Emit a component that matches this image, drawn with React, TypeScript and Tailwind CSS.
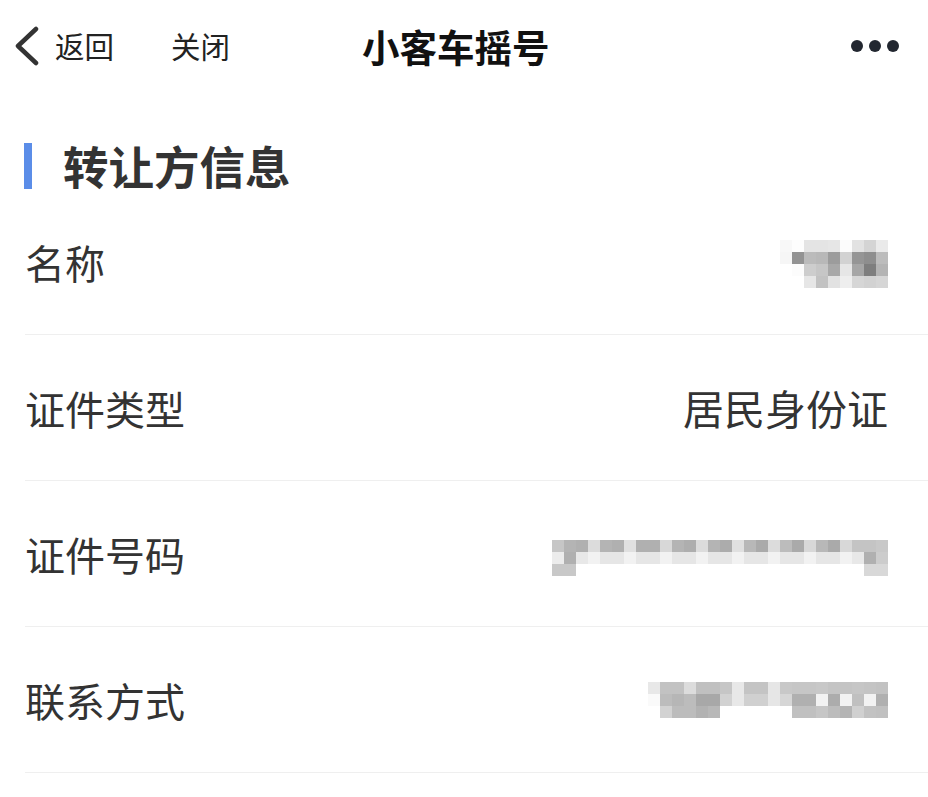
import React from 'react';

// blurred (mosaic) values: grey shades keyed by short code
const G: Record<string, string> = {
  ff: 'bg-white', fd: 'bg-[#fdfdfd]', fc: 'bg-[#fcfcfc]', fa: 'bg-[#fafafa]', f8: 'bg-[#f8f8f8]',
  f6: 'bg-[#f6f6f6]', f2: 'bg-[#f2f2f2]', ee: 'bg-[#eeeeee]', ec: 'bg-[#ececec]', ea: 'bg-[#eaeaea]',
  e8: 'bg-[#e8e8e8]', e6: 'bg-[#e6e6e6]', e4: 'bg-[#e4e4e4]', e2: 'bg-[#e2e2e2]', e0: 'bg-[#e0e0e0]',
  dc: 'bg-[#dcdcdc]', d8: 'bg-[#d8d8d8]', d6: 'bg-[#d6d6d6]', d4: 'bg-[#d4d4d4]', d2: 'bg-[#d2d2d2]',
  d0: 'bg-[#d0d0d0]', cd: 'bg-[#cdcdcd]', c8: 'bg-[#c8c8c8]', c6: 'bg-[#c6c6c6]', c4: 'bg-[#c4c4c4]',
  c2: 'bg-[#c2c2c2]', c0: 'bg-[#c0c0c0]', bc: 'bg-[#bcbcbc]', bb: 'bg-[#bbbbbb]', b8: 'bg-[#b8b8b8]',
  b6: 'bg-[#b6b6b6]', b4: 'bg-[#b4b4b4]', b2: 'bg-[#b2b2b2]', b0: 'bg-[#b0b0b0]', ae: 'bg-[#aeaeae]',
  ac: 'bg-[#acacac]', aa: 'bg-[#aaaaaa]', a8: 'bg-[#a8a8a8]', a6: 'bg-[#a6a6a6]', '9c': 'bg-[#9c9c9c]',
  '95': 'bg-[#959595]', '93': 'bg-[#939393]', '8e': 'bg-[#8e8e8e]', '7e': 'bg-[#7e7e7e]',
};

const nameMosaic = [
  'f8 fd e4 e4 e6 fc e2 d4 ea',
  'f6 93 bb b8 9c d2 95 8e bc',
  'ff fc cd c6 a8 e6 a6 7e b4',
  'ff ff e6 c2 e2 ee d6 d2 d6',
];

const idMosaic = [
  'c6 b4 b0 dc b4 b0 e0 b0 b0 d8 b4 ae dc b4 ac e0 b8 aa dc bc aa d8 b8 aa d8 c4 c4 c8',
  'ec b0 e8 f2 e6 e6 f2 e6 e6 f2 e6 e6 f2 e6 e6 f2 e6 e6 f2 e6 e6 f2 e6 e6 f2 e8 b0 cc',
  'c8 c8 ff ff ff ff ff ff ff ff ff ff ff ff ff ff ff ff ff ff ff ff ff ff ff ff d8 d8',
];

const phoneMosaic = [
  'e8 c2 c2 dc c0 c0 c6 e8 c4 c4 e6 c8 c6 c6 c8 c4 c4 c6 c4 c2',
  'fa bc b6 bc a8 a8 d2 e8 d0 d0 e6 d6 b0 b0 f2 ac f2 c0 f2 b0',
  'ff d2 bc bc b2 b8 ff ff ff ff ff ff c0 c0 c6 bc b4 d0 c2 c0',
];

const Mosaic = ({ rows, className = '' }: { rows: string[]; className?: string }) => (
  <div className={`flex flex-col ${className}`}>
    {rows.map((r, i) => (
      <div key={i} className="flex">
        {r.split(' ').map((c, j) => (
          <div key={j} className={`w-3 h-3 ${G[c] ?? 'bg-[#cccccc]'}`} />
        ))}
      </div>
    ))}
  </div>
);

const Row = ({ label, children }: { label: string; children: React.ReactNode }) => (
  <div className="h-[146px] border-b border-[#efefef] flex items-center justify-between pr-10">
    <span className="text-[40px] leading-none text-[#333333]">{label}</span>
    {children}
  </div>
);

export default function App() {
  return (
    <div
      className="w-[928px] h-[797px] bg-white overflow-hidden"
      style={{ fontFamily: '"Noto Sans CJK SC", "Noto Sans", sans-serif' }}
    >
      {/* nav bar */}
      <div className="h-[92px] flex items-center">
        <div className="flex items-center w-[362px] pl-[14px]">
          <svg width="26" height="40" viewBox="0 0 26 40" className="mr-[15px]">
            <path d="M22 3 L4 20 L22 37" fill="none" stroke="#333333" strokeWidth="4.5" strokeLinecap="round" strokeLinejoin="round" />
          </svg>
          <span className="text-[29.5px] text-[#222222] leading-none">返回</span>
          <span className="text-[29.5px] text-[#222222] leading-none ml-[57px]">关闭</span>
        </div>
        <span className="text-[37.5px] font-bold text-[#111111] leading-none">小客车摇号</span>
        <div className="flex-1" />
        <div className="flex items-center gap-[6px] pr-[29px]">
          <span className="w-3 h-3 rounded-full bg-[#222730]" />
          <span className="w-3 h-3 rounded-full bg-[#222730]" />
          <span className="w-3 h-3 rounded-full bg-[#222730]" />
        </div>
      </div>

      {/* section */}
      <div className="pl-6 pt-[51px]">
        <div className="flex items-center h-[46px]">
          <div className="w-2 h-[46px] bg-[#5b8de8]" />
          <span className="ml-[31px] text-[45.5px] font-bold text-[#333333] leading-none">转让方信息</span>
        </div>

        <div className="pl-px">
          <Row label="名称">
            <Mosaic rows={nameMosaic} className="mt-1" />
          </Row>
          <Row label="证件类型">
            <span className="text-[41px] leading-none text-[#333333]">居民身份证</span>
          </Row>
          <Row label="证件号码">
            <Mosaic rows={idMosaic} className="mt-2" />
          </Row>
          <Row label="联系方式">
            <Mosaic rows={phoneMosaic} />
          </Row>
        </div>
      </div>
    </div>
  );
}
